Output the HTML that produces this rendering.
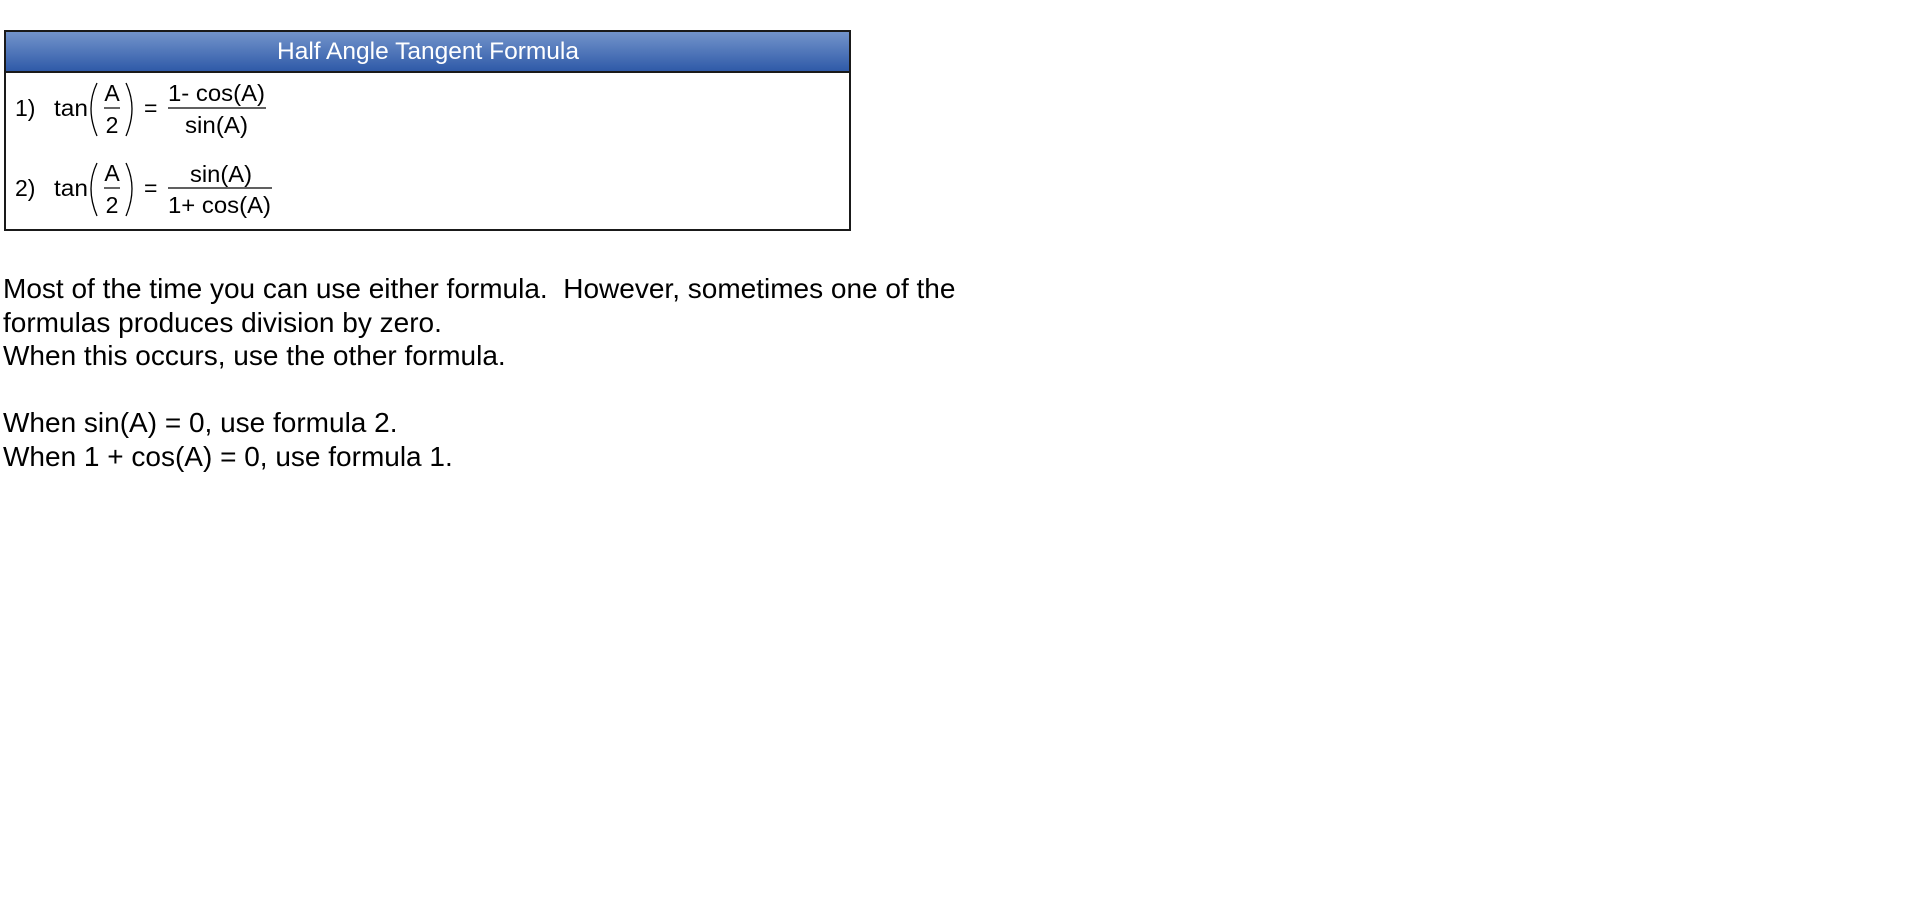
<!DOCTYPE html>
<html><head><meta charset="utf-8"><style>
html,body{margin:0;padding:0;background:#fff;width:1914px;height:903px;overflow:hidden}
.box{position:absolute;left:4px;top:30px;width:843px;height:197px;border:2px solid #1a1a1a}
.hdr{position:absolute;left:0;top:0;right:0;height:39px;border-bottom:2px solid #1a1a1a;background:linear-gradient(#7394cb,#2f5aa8)}
svg{position:absolute;left:0;top:0}
.t{position:absolute;left:3px;top:272px;font:28px "Liberation Sans",sans-serif;line-height:33.5px;color:#000;white-space:pre}
</style></head><body>
<div class="box"><div class="hdr"></div></div>
<svg width="900" height="240" font-family="Liberation Sans, sans-serif" font-size="23" fill="#000">
<text x="428" y="59" text-anchor="middle" fill="#fff" font-size="24" textLength="302" lengthAdjust="spacingAndGlyphs">Half Angle Tangent Formula</text>
<g>
<text x="15" y="116">1)</text>
<text x="54" y="116" textLength="34" lengthAdjust="spacingAndGlyphs">tan</text>
<path d="M97 83 Q85 108 97 136" stroke="#000" stroke-width="1.3" fill="none"/>
<path d="M126 83 Q138 108 126 136" stroke="#000" stroke-width="1.3" fill="none"/>
<text x="112" y="101" text-anchor="middle">A</text>
<line x1="104" y1="108" x2="120" y2="108" stroke="#000" stroke-width="1.2"/>
<text x="112" y="133" text-anchor="middle">2</text>
<text x="144" y="116">=</text>
<text x="168" y="101" textLength="97" lengthAdjust="spacingAndGlyphs">1- cos(A)</text>
<line x1="168" y1="108" x2="266" y2="108" stroke="#000" stroke-width="1.2"/>
<text x="185" y="133" textLength="63" lengthAdjust="spacingAndGlyphs">sin(A)</text>
</g>
<g transform="translate(0,80)">
<text x="15" y="116">2)</text>
<text x="54" y="116" textLength="34" lengthAdjust="spacingAndGlyphs">tan</text>
<path d="M97 83 Q85 108 97 136" stroke="#000" stroke-width="1.3" fill="none"/>
<path d="M126 83 Q138 108 126 136" stroke="#000" stroke-width="1.3" fill="none"/>
<text x="112" y="101" text-anchor="middle">A</text>
<line x1="104" y1="108" x2="120" y2="108" stroke="#000" stroke-width="1.2"/>
<text x="112" y="133" text-anchor="middle">2</text>
<text x="144" y="116">=</text>
<text x="190" y="102" textLength="62" lengthAdjust="spacingAndGlyphs">sin(A)</text>
<line x1="168" y1="108" x2="272" y2="108" stroke="#000" stroke-width="1.2"/>
<text x="168" y="133" textLength="103" lengthAdjust="spacingAndGlyphs">1+ cos(A)</text>
</g>
</svg>
<div class="t">Most of the time you can use either formula.  However, sometimes one of the
formulas produces division by zero.
When this occurs, use the other formula.

When sin(A) = 0, use formula 2.
When 1 + cos(A) = 0, use formula 1.</div>
</body></html>
